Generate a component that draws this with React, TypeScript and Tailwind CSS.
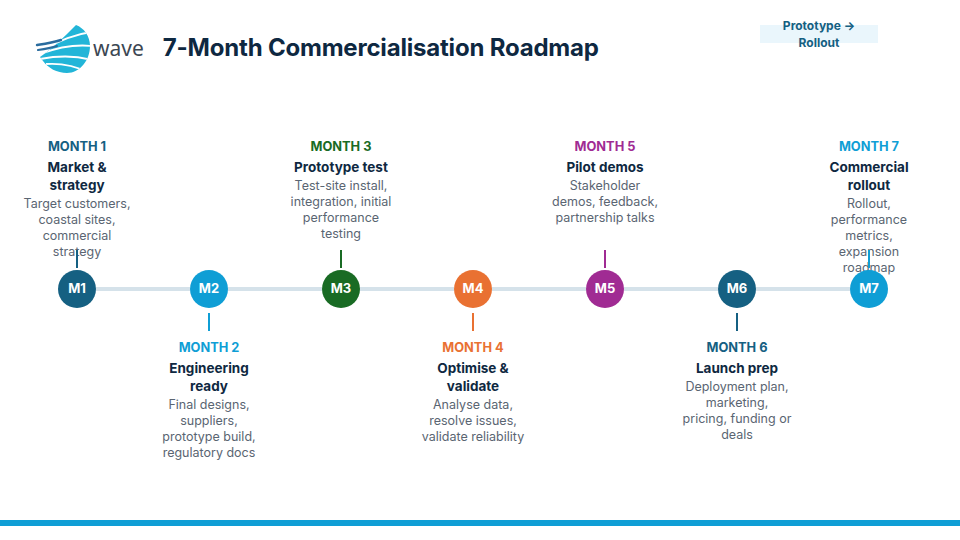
import React from 'react';

interface Month {
  n: number;
  color: string;
  pos: 'top' | 'bottom';
  title: string[];
  desc: string[];
}

const months: Month[] = [
  { n: 1, color: '#156082', pos: 'top', title: ['Market &', 'strategy'], desc: ['Target customers,', 'coastal sites,', 'commercial', 'strategy'] },
  { n: 2, color: '#0F9ED5', pos: 'bottom', title: ['Engineering', 'ready'], desc: ['Final designs,', 'suppliers,', 'prototype build,', 'regulatory docs'] },
  { n: 3, color: '#196B24', pos: 'top', title: ['Prototype test'], desc: ['Test-site install,', 'integration, initial', 'performance', 'testing'] },
  { n: 4, color: '#E97132', pos: 'bottom', title: ['Optimise &', 'validate'], desc: ['Analyse data,', 'resolve issues,', 'validate reliability'] },
  { n: 5, color: '#A02B93', pos: 'top', title: ['Pilot demos'], desc: ['Stakeholder', 'demos, feedback,', 'partnership talks'] },
  { n: 6, color: '#156082', pos: 'bottom', title: ['Launch prep'], desc: ['Deployment plan,', 'marketing,', 'pricing, funding or', 'deals'] },
  { n: 7, color: '#0F9ED5', pos: 'top', title: ['Commercial', 'rollout'], desc: ['Rollout,', 'performance', 'metrics,', 'expansion', 'roadmap'] },
];

// logo: cyan fan cut by white wave lines, two dark stripes on the left
const WaveLogo = () => (
  <svg width="58" height="52" viewBox="0 0 58 52">
    <defs>
      <clipPath id="waveClip">
        <path d="M42 3 C 50 6, 56 14, 56 24 C 56 38, 46 51, 33 51 C 23 51, 14 46, 9 39 L 6 35 C 18 27, 30 15, 42 3 Z" />
      </clipPath>
    </defs>
    <g clipPath="url(#waveClip)">
      <rect x="0" y="0" width="58" height="52" fill="#22b5d8" />
      <g fill="none" stroke="#ffffff" strokeWidth="1.8">
        <path d="M12 26 C 26 19, 40 12, 58 10" />
        <path d="M6 32 C 22 26, 40 22, 58 24" />
        <path d="M6 37 C 22 34, 40 33, 58 38" />
        <path d="M12 42 C 26 41, 40 43, 56 51" />
      </g>
    </g>
    <g fill="none" stroke="#2a6c9e" strokeLinecap="round">
      <path d="M3 23 C 10 22, 18 21, 27 18" strokeWidth="2.4" />
      <path d="M4 28 C 11 27, 17 26, 23 24" strokeWidth="2" />
    </g>
  </svg>
);

const TextBlock = ({ m }: { m: Month }) => (
  <div className="flex flex-col items-center text-center">
    <div className="text-[12.8px] leading-[18px] font-bold" style={{ color: m.color }}>
      MONTH {m.n}
    </div>
    <div className="mt-[2px] text-[13.5px] leading-[18px] font-bold text-[#0e2841]">
      {m.title.map((t) => (
        <div key={t} className="whitespace-nowrap">{t}</div>
      ))}
    </div>
    <div className="mt-[2px] text-[12.5px] leading-[16px] text-[#5a6572]">
      {m.desc.map((t) => (
        <div key={t} className="whitespace-nowrap">{t}</div>
      ))}
    </div>
  </div>
);

const Column = ({ m, first, last }: { m: Month; first: boolean; last: boolean }) => (
  <div className="flex flex-col items-center">
    <div className="h-[113px] w-full pt-[1px]">{m.pos === 'top' && <TextBlock m={m} />}</div>
    <div className="h-[18px] w-[1.5px]" style={{ backgroundColor: m.pos === 'top' ? m.color : 'transparent' }} />
    <div className="mt-[2px] flex w-full items-center">
      <div className={first ? 'h-[4px] flex-1' : 'h-[4px] flex-1 bg-[#d5e2ea]'} />
      <div
        className="flex h-[38px] w-[38px] items-center justify-center rounded-full text-[13px] font-bold text-white"
        style={{ backgroundColor: m.color }}
      >
        M{m.n}
      </div>
      <div className={last ? 'h-[4px] flex-1' : 'h-[4px] flex-1 bg-[#d5e2ea]'} />
    </div>
    <div className="mt-[5px] h-[18px] w-[1.5px]" style={{ backgroundColor: m.pos === 'bottom' ? m.color : 'transparent' }} />
    <div className="mt-[8px] w-full">{m.pos === 'bottom' && <TextBlock m={m} />}</div>
  </div>
);

export default function App() {
  return (
    <div className="flex h-[540px] w-[960px] flex-col bg-white" style={{ fontFamily: 'Inter, "Liberation Sans", sans-serif' }}>
      <div className="flex items-start pl-[34px] pt-[22px]">
        <div className="flex h-[52px] items-center">
          <WaveLogo />
          <span className="ml-[1px] text-[21px] leading-none text-[#3c4753]" style={{ fontFamily: '"Noto Sans", sans-serif' }}>
            wave
          </span>
          <h1 className="ml-[19px] text-[24px] font-bold tracking-[-0.2px] text-[#0e2841]">7-Month Commercialisation Roadmap</h1>
        </div>
        <div className="ml-auto mr-[82px] mt-[3px] flex h-[18px] w-[118px] flex-col items-center justify-center bg-[#eaf6fc] text-center text-[12px] font-bold leading-[17px] text-[#156082]">
          <div className="whitespace-nowrap">Prototype →</div>
          <div>Rollout</div>
        </div>
      </div>

      <div className="ml-[11px] mt-[63px] grid w-[924px] grid-cols-7">
        {months.map((m, i) => (
          <Column key={m.n} m={m} first={i === 0} last={i === months.length - 1} />
        ))}
      </div>

      <div className="mt-auto mb-[14px] h-[6px] w-full bg-[#0f9ed5]" />
    </div>
  );
}
